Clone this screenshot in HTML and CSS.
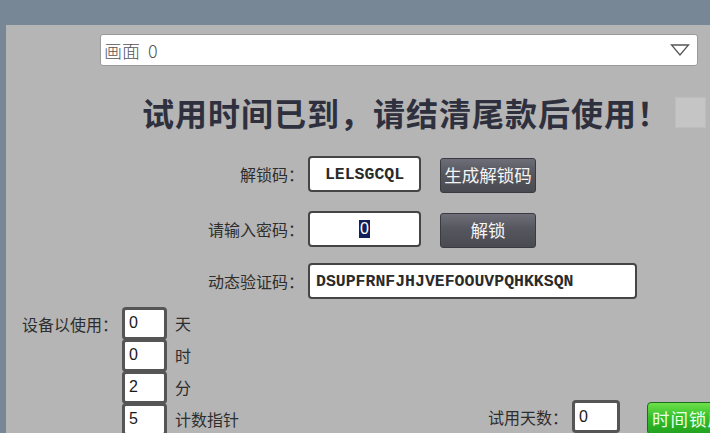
FILE: index.html
```html
<!DOCTYPE html>
<html lang="zh-CN">
<head>
<meta charset="utf-8">
<title>试用时间已到</title>
<link rel="stylesheet" href="styles.css">
</head>
<body>
<div class="window">
  <div class="select">
    <span class="select-text">画面&nbsp;&nbsp;0</span>
    <svg class="select-arrow" width="20" height="12" viewBox="0 0 20 12"><polygon points="1.5,1 18.5,1 10,11" fill="none" stroke="#555" stroke-width="1.3"/></svg>
  </div>

  <div class="title-row">
    <h1 class="title">试用时间已到，请结清尾款后使用！</h1>
    <div class="corner-box"></div>
  </div>

  <div class="form-row row-1">
    <span class="label">解锁码：</span>
    <div class="field field-code">LELSGCQL</div>
    <div class="btn">生成解锁码</div>
  </div>

  <div class="form-row row-2">
    <span class="label">请输入密码：</span>
    <div class="field field-pass"><span class="sel">0</span></div>
    <div class="btn">解锁</div>
  </div>

  <div class="form-row row-3">
    <span class="label">动态验证码：</span>
    <div class="field field-wide">DSUPFRNFJHJVEFOOUVPQHKKSQN</div>
  </div>

  <div class="bottom">
    <div class="used">
      <span class="used-label">设备以使用：</span>
      <div class="stack">
        <div class="small-field">0</div><span class="unit">天</span>
        <div class="small-field">0</div><span class="unit">时</span>
        <div class="small-field">2</div><span class="unit">分</span>
        <div class="small-field">5</div><span class="unit">计数指针</span>
      </div>
    </div>
    <div class="trial">
      <span class="trial-label">试用天数：</span>
      <div class="small-field trial-field">0</div>
      <div class="btn-green">时间锁屏</div>
    </div>
  </div>
</div>
</body>
</html>
```

FILE: styles.css
```css
html, body {
  margin: 0;
  padding: 0;
  height: 433px;
  overflow: hidden;
}
body {
  background: #778796;
  font-family: "Noto Sans CJK SC", "Liberation Sans", sans-serif;
  padding-top: 25px;
  padding-left: 6px;
  box-sizing: border-box;
}
.window {
  background: #b5b5b5;
  height: 420px;
  padding-top: 9px;
  box-sizing: border-box;
  overflow: hidden;
}
.select {
  margin-left: 94px;
  width: 598px;
  height: 32px;
  box-sizing: border-box;
  background: #fff;
  border: 1px solid #9a9a9a;
  border-radius: 3px;
  display: flex;
  align-items: center;
  justify-content: space-between;
  padding: 0 7px 0 3px;
}
.select-text {
  font-size: 18px;
  color: #555;
  font-weight: 300;
}
.select-arrow {
  display: block;
}
.title-row {
  margin-top: 28px;
  height: 36px;
  display: flex;
  align-items: center;
}
.title {
  margin: 0 0 0 136px;
  font-size: 32px;
  letter-spacing: 1px;
  line-height: 36px;
  font-weight: 700;
  color: #2f303e;
  white-space: nowrap;
}
.corner-box {
  margin-left: auto;
  margin-right: 4px;
  width: 31px;
  height: 31px;
  background: #c5c5c5;
  border: 1px solid #bdbdbd;
  box-sizing: border-box;
  flex-shrink: 0;
}
.form-row {
  display: flex;
  align-items: flex-start;
  height: 36px;
}
.row-1 { margin-top: 26px; }
.row-2 { margin-top: 19px; }
.row-3 { margin-top: 16px; }
.label {
  width: 298px;
  margin-right: 4px;
  text-align: right;
  font-size: 16px;
  line-height: 36px;
  color: #2e2e2e;
  white-space: nowrap;
  flex-shrink: 0;
}
.field {
  height: 36px;
  box-sizing: border-box;
  background: #fff;
  border: 2px solid #454545;
  border-radius: 4px;
  font-family: "Liberation Mono", monospace;
  font-weight: 700;
  font-size: 16.5px;
  color: #2a2a2a;
  display: flex;
  align-items: center;
  flex-shrink: 0;
}
.field-code {
  width: 113px;
  justify-content: center;
}
.field-pass {
  width: 113px;
  justify-content: center;
}
.sel {
  background: #13205a;
  color: #fff;
  font-family: "Liberation Sans", sans-serif;
  font-weight: 400;
  font-size: 16px;
  line-height: 18px;
  padding: 0 1px;
}
.field-wide {
  width: 329px;
  padding-left: 6px;
}
.btn {
  margin-left: 19px;
  margin-top: 2px;
  width: 96px;
  height: 35px;
  box-sizing: border-box;
  border: 1px solid #3a3a40;
  border-radius: 3px;
  background: linear-gradient(#6e6e78, #56565f 45%, #4a4a52);
  color: #f4f4f4;
  font-size: 17.5px;
  padding-bottom: 2px;
  display: flex;
  align-items: center;
  justify-content: center;
  white-space: nowrap;
  flex-shrink: 0;
}
.bottom {
  margin-top: 8px;
  padding-left: 16px;
  display: flex;
  align-items: flex-start;
}
.used {
  width: 466px;
  flex-shrink: 0;
  display: flex;
  align-items: flex-start;
}
.used-label {
  width: 100px;
  flex-shrink: 0;
  font-size: 16px;
  line-height: 34px;
  color: #2e2e2e;
  white-space: nowrap;
}
.stack {
  display: grid;
  grid-template-columns: 45px auto;
  grid-auto-rows: 32px;
  column-gap: 8px;
  align-items: center;
}
.small-field {
  height: 33px;
  box-sizing: border-box;
  background: #fff;
  border: 3px solid #555;
  border-radius: 4px;
  font-family: "Liberation Sans", sans-serif;
  font-size: 16px;
  color: #1a1a1a;
  display: flex;
  align-items: center;
  padding-left: 4px;
}
.unit {
  font-size: 16px;
  color: #2e2e2e;
  white-space: nowrap;
}
.trial {
  margin-top: 93px;
  display: flex;
  align-items: flex-start;
  flex-shrink: 0;
}
.trial-label {
  width: 80px;
  margin-right: 4px;
  font-size: 16px;
  line-height: 34px;
  color: #2e2e2e;
  white-space: nowrap;
}
.trial-field {
  width: 48px;
  flex-shrink: 0;
}
.btn-green {
  margin-left: 27px;
  margin-top: 2px;
  width: 92px;
  height: 33px;
  box-sizing: border-box;
  border: 1px solid #1d6b1d;
  border-radius: 4px;
  background: linear-gradient(#6ee04a, #35c02a 45%, #22a01e);
  color: #eaffea;
  font-size: 17.5px;
  letter-spacing: 1px;
  display: flex;
  align-items: center;
  padding-left: 4px;
  white-space: nowrap;
  flex-shrink: 0;
}
```
